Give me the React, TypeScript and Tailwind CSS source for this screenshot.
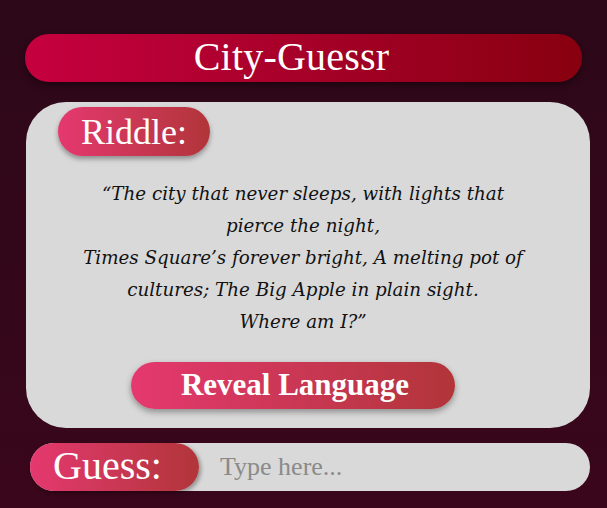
export default function App() {
  return (
    <div className="w-[607px] h-[508px] overflow-hidden bg-gradient-to-b from-[#2c0818] to-[#3a061b] flex flex-col" style={{ fontFamily: '"Liberation Serif", serif' }}>
      <div className="mt-[34px] ml-[25px] w-[557px] h-[48px] rounded-full bg-gradient-to-r from-[#c6003f] to-[#88000f] shadow-[0_3px_6px_rgba(0,0,0,0.4)] flex items-center justify-center pr-[24px]">
        <span className="text-white text-[40px] leading-none pb-[2px] tracking-[0.2px]">City-Guessr</span>
      </div>
      <div className="mt-[20px] ml-[26px] w-[564px] h-[326px] rounded-[40px] bg-[#d9d9d9] flex flex-col">
        <div className="ml-[32px] mt-[5px] w-[152px] h-[49px] rounded-full bg-gradient-to-r from-[#e5386f] to-[#b13539] shadow-[0_3px_5px_rgba(0,0,0,0.35)] flex items-center justify-center">
          <span className="text-white text-[36px] leading-none">Riddle:</span>
        </div>
        <p className="mt-[22px] ml-[51px] w-[452px] text-center italic text-[#111] text-[18.3px] leading-[32px]" style={{ fontFamily: '"DejaVu Serif", serif' }}>
          “The city that never sleeps, with lights that pierce the night,
          <br />
          Times Square’s forever bright, A melting pot of cultures; The Big Apple in plain sight.
          <br />
          Where am I?”
        </p>
        <div className="mt-[24px] ml-[105px] w-[324px] h-[47px] rounded-full bg-gradient-to-r from-[#e5386f] to-[#b13539] shadow-[0_3px_6px_rgba(0,0,0,0.35)] flex items-center justify-center pl-[4px]">
          <span className="text-white text-[31px] font-bold leading-none pb-[2px]">Reveal Language</span>
        </div>
      </div>
      <div className="mt-[15px] ml-[30px] w-[560px] h-[48px] rounded-full bg-[#d9d9d9] flex items-center">
        <div className="w-[169px] h-[48px] rounded-full bg-gradient-to-r from-[#e5386f] to-[#b13539] shadow-[2px_2px_4px_rgba(0,0,0,0.35)] flex items-center justify-center pr-[14px]">
          <span className="text-white text-[40px] leading-none pb-[2px]">Guess:</span>
        </div>
        <span className="ml-[21px] text-[#8a8a8a] text-[26px] leading-none">Type here...</span>
      </div>
    </div>
  );
}
